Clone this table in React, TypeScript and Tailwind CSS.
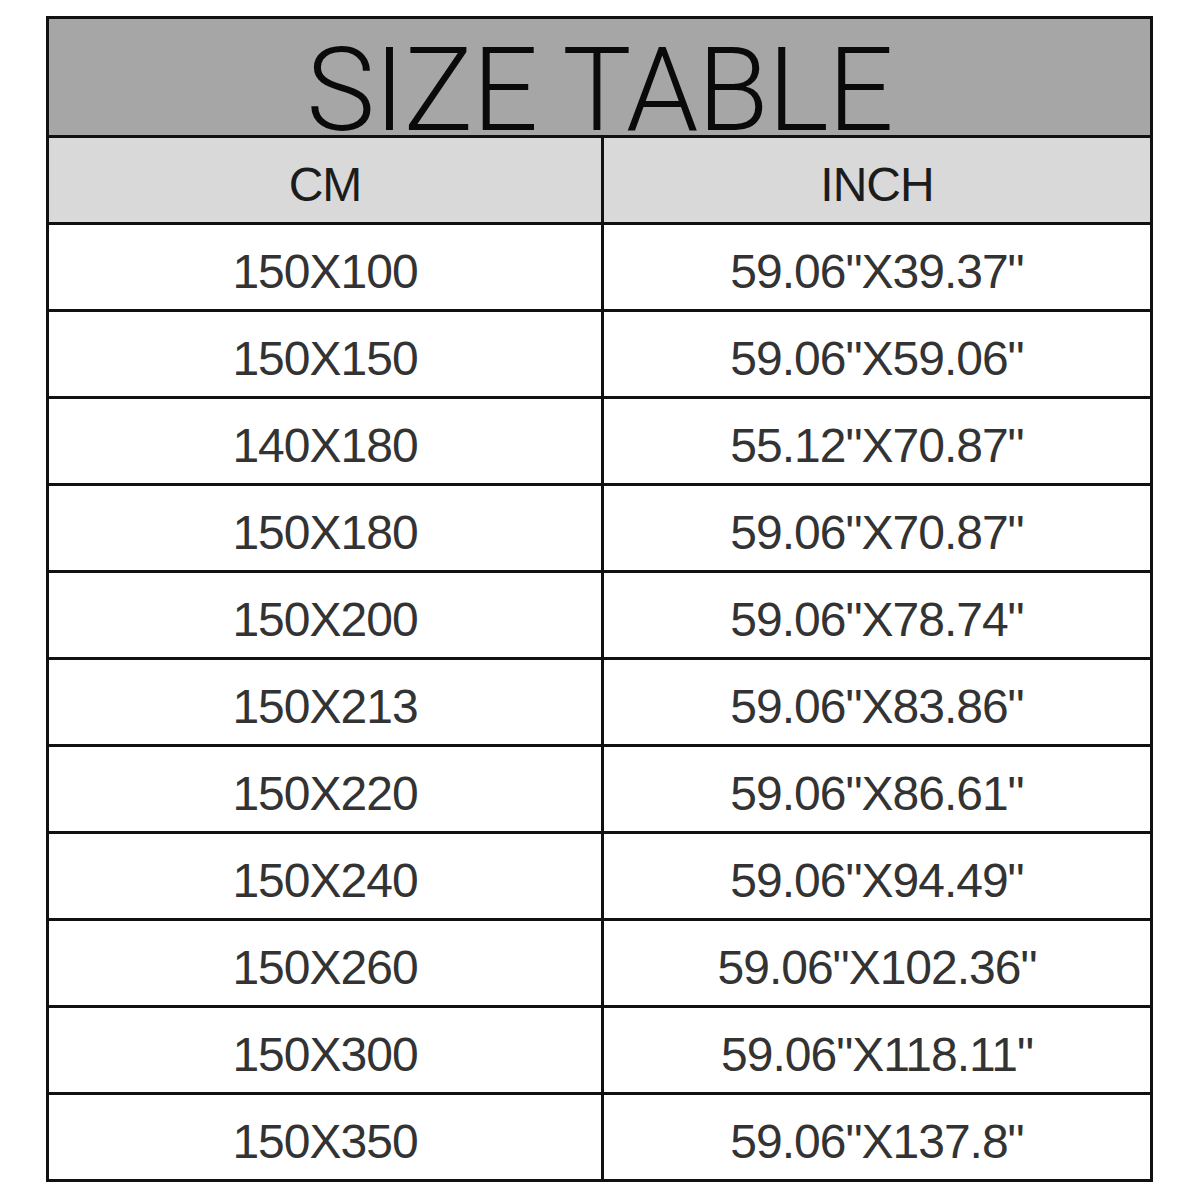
const rows: [string, string][] = [
  ["150X100", '59.06"X39.37"'],
  ["150X150", '59.06"X59.06"'],
  ["140X180", '55.12"X70.87"'],
  ["150X180", '59.06"X70.87"'],
  ["150X200", '59.06"X78.74"'],
  ["150X213", '59.06"X83.86"'],
  ["150X220", '59.06"X86.61"'],
  ["150X240", '59.06"X94.49"'],
  ["150X260", '59.06"X102.36"'],
  ["150X300", '59.06"X118.11"'],
  ["150X350", '59.06"X137.8"'],
];

const font = { fontFamily: '"Liberation Sans", Arial, sans-serif' };

function Row({ a, b, head, last }: { a: string; b: string; head?: boolean; last?: boolean }) {
  return (
    <div
      className={`grid grid-cols-[555px_546px] h-[84px] box-content ${last ? "" : "border-b-[3px] border-[#111]"} ${
        head ? "bg-[#d9d9d9] text-[#1c1c1c]" : "bg-white text-[#333]"
      }`}
    >
      <div className="flex items-center justify-center pt-[10px] border-r-[3px] border-[#111] text-[48px] leading-[50px] tracking-[-1px]">
        {a}
      </div>
      <div className="flex items-center justify-center pt-[10px] text-[48px] leading-[50px] tracking-[-1px]">
        {b}
      </div>
    </div>
  );
}

export default function App() {
  return (
    <div className="w-[1200px] h-[1200px] bg-white pt-[16px] pl-[46px]" style={font}>
      <div className="w-[1107px] border-[3px] border-[#111] flex flex-col">
        <div className="h-[116px] box-content bg-[#a6a6a6] border-b-[3px] border-[#111] flex items-end justify-center">
          <div className="font-['Roboto'] font-light text-[116px] leading-[90px] tracking-[-1px] text-[#0a0a0a]">
            SIZE TABLE
          </div>
        </div>
        <Row a="CM" b="INCH" head />
        {rows.map(([a, b], i) => (
          <Row key={a} a={a} b={b} last={i === rows.length - 1} />
        ))}
      </div>
    </div>
  );
}
